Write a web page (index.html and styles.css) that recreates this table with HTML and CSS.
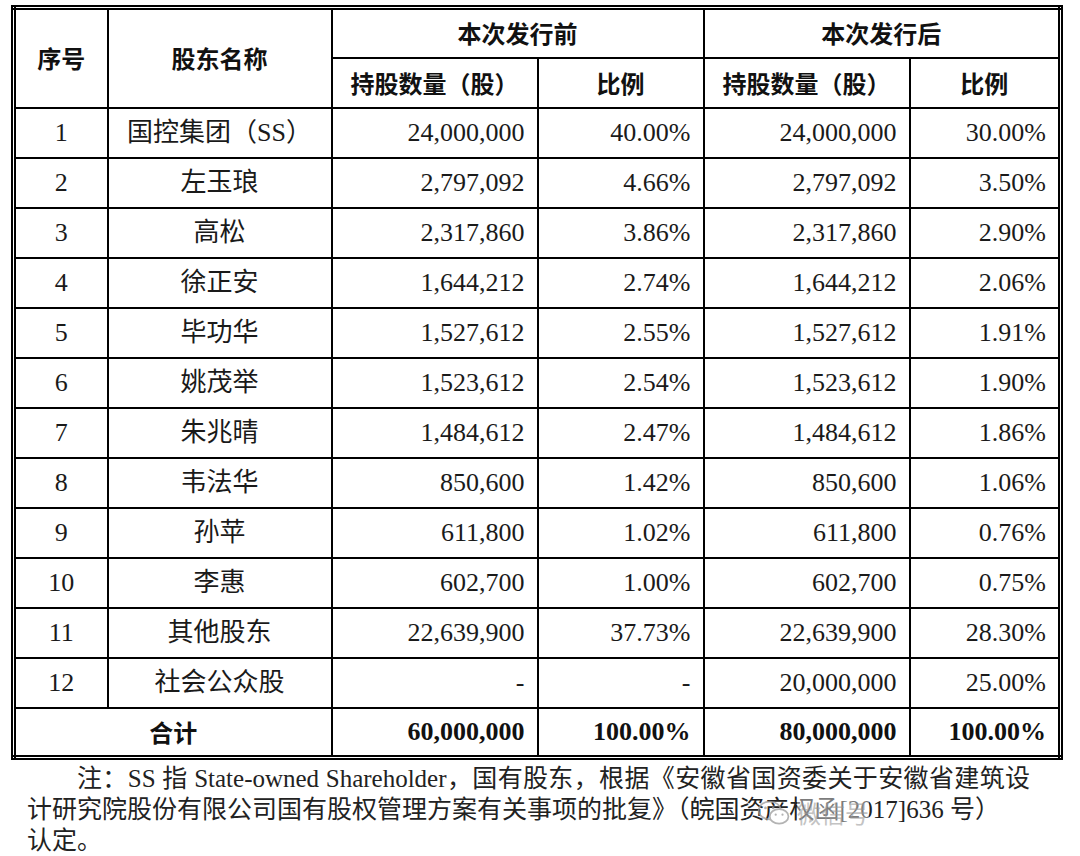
FILE: index.html
```html
<!DOCTYPE html>
<html lang="zh-CN">
<head>
<meta charset="utf-8">
<title>股东持股情况</title>
<link rel="stylesheet" href="styles.css">
</head>
<body>
<div class="page">
  <table class="holders">
    <colgroup>
      <col class="c-no"><col class="c-name"><col class="c-qty"><col class="c-pct"><col class="c-qty"><col class="c-pct2">
    </colgroup>
    <thead>
      <tr>
        <th rowspan="2">序号</th>
        <th rowspan="2">股东名称</th>
        <th colspan="2">本次发行前</th>
        <th colspan="2">本次发行后</th>
      </tr>
      <tr>
        <th>持股数量（股）</th>
        <th>比例</th>
        <th>持股数量（股）</th>
        <th>比例</th>
      </tr>
    </thead>
    <tbody>
      <tr><td class="ctr">1</td><td class="ctr">国控集团（SS）</td><td class="num">24,000,000</td><td class="num">40.00%</td><td class="num">24,000,000</td><td class="num">30.00%</td></tr>
      <tr><td class="ctr">2</td><td class="ctr">左玉琅</td><td class="num">2,797,092</td><td class="num">4.66%</td><td class="num">2,797,092</td><td class="num">3.50%</td></tr>
      <tr><td class="ctr">3</td><td class="ctr">高松</td><td class="num">2,317,860</td><td class="num">3.86%</td><td class="num">2,317,860</td><td class="num">2.90%</td></tr>
      <tr><td class="ctr">4</td><td class="ctr">徐正安</td><td class="num">1,644,212</td><td class="num">2.74%</td><td class="num">1,644,212</td><td class="num">2.06%</td></tr>
      <tr><td class="ctr">5</td><td class="ctr">毕功华</td><td class="num">1,527,612</td><td class="num">2.55%</td><td class="num">1,527,612</td><td class="num">1.91%</td></tr>
      <tr><td class="ctr">6</td><td class="ctr">姚茂举</td><td class="num">1,523,612</td><td class="num">2.54%</td><td class="num">1,523,612</td><td class="num">1.90%</td></tr>
      <tr><td class="ctr">7</td><td class="ctr">朱兆晴</td><td class="num">1,484,612</td><td class="num">2.47%</td><td class="num">1,484,612</td><td class="num">1.86%</td></tr>
      <tr><td class="ctr">8</td><td class="ctr">韦法华</td><td class="num">850,600</td><td class="num">1.42%</td><td class="num">850,600</td><td class="num">1.06%</td></tr>
      <tr><td class="ctr">9</td><td class="ctr">孙苹</td><td class="num">611,800</td><td class="num">1.02%</td><td class="num">611,800</td><td class="num">0.76%</td></tr>
      <tr><td class="ctr">10</td><td class="ctr">李惠</td><td class="num">602,700</td><td class="num">1.00%</td><td class="num">602,700</td><td class="num">0.75%</td></tr>
      <tr><td class="ctr">11</td><td class="ctr">其他股东</td><td class="num">22,639,900</td><td class="num">37.73%</td><td class="num">22,639,900</td><td class="num">28.30%</td></tr>
      <tr><td class="ctr">12</td><td class="ctr">社会公众股</td><td class="num">-</td><td class="num">-</td><td class="num">20,000,000</td><td class="num">25.00%</td></tr>
      <tr class="total"><td class="ctr" colspan="2">合计</td><td class="num">60,000,000</td><td class="num">100.00%</td><td class="num">80,000,000</td><td class="num">100.00%</td></tr>
    </tbody>
  </table>
  <div class="note-wrap">
    <p class="note">注：SS 指 State-owned Shareholder，国有股东，根据《安徽省国资委关于安徽省建筑设计研究院股份有限公司国有股权管理方案有关事项的批复》（皖国资产权函[2017]636 号）<br>认定。</p>
    <div class="watermark">
      <svg class="wm-icon" viewBox="0 0 40 32" width="34" height="28" aria-hidden="true">
        <ellipse cx="15" cy="13" rx="13" ry="10.5" fill="none" stroke="#9a9a9a" stroke-width="2"/>
        <ellipse cx="26" cy="20" rx="11" ry="8.5" fill="#fff" stroke="#9a9a9a" stroke-width="2"/>
        <circle cx="10" cy="10" r="1.6" fill="#9a9a9a"/>
        <circle cx="19" cy="10" r="1.6" fill="#9a9a9a"/>
        <circle cx="22" cy="18" r="1.3" fill="#9a9a9a"/>
        <circle cx="30" cy="18" r="1.3" fill="#9a9a9a"/>
      </svg>
      <span class="wm-text">微信号</span>
    </div>
  </div>
</div>
</body>
</html>
```

FILE: styles.css
```css
html, body {
  margin: 0;
  padding: 0;
  background: #ffffff;
}

.page {
  padding: 5px 0 0 11px;
  color: #1a1a1a;
  font-family: "Liberation Serif", "Noto Sans CJK SC", serif;
}

.holders {
  border-collapse: collapse;
  table-layout: fixed;
  width: 1047px;
  border: 5px double #000;
  font-size: 26px;
}

.c-no { width: 94px; }
.c-name { width: 224px; }
.c-qty { width: 206px; }
.c-pct { width: 166px; }
.c-pct2 { width: 151px; }

.holders th,
.holders td {
  border: 2px solid #000;
  height: 50px;
  padding: 0 12px;
  box-sizing: border-box;
  white-space: nowrap;
  line-height: 30px;
}

.holders th {
  font-family: "Noto Sans CJK SC", sans-serif;
  font-weight: 700;
  font-size: 24px;
  text-align: center;
  color: #111;
}

.holders td.ctr {
  text-align: center;
  font-weight: 400;
}

.holders td.num {
  text-align: right;
}

.holders .total td {
  font-weight: 700;
  color: #111;
}

.holders .total td.ctr {
  font-family: "Noto Sans CJK SC", sans-serif;
  font-size: 24px;
}

.note-wrap {
  position: relative;
  width: 1003px;
  margin: 3px 0 0 16px;
}

.note {
  margin: 0;
  font-size: 25px;
  line-height: 31px;
  text-indent: 2em;
  text-align: justify;
  color: #222;
}

.watermark {
  position: absolute;
  left: 730px;
  top: 32px;
  display: flex;
  align-items: center;
  gap: 6px;
  opacity: 0.75;
}

.wm-text {
  font-family: "Noto Sans CJK SC", sans-serif;
  font-size: 24px;
  color: #b0b0b0;
  background: rgba(255,255,255,0.55);
}
```
